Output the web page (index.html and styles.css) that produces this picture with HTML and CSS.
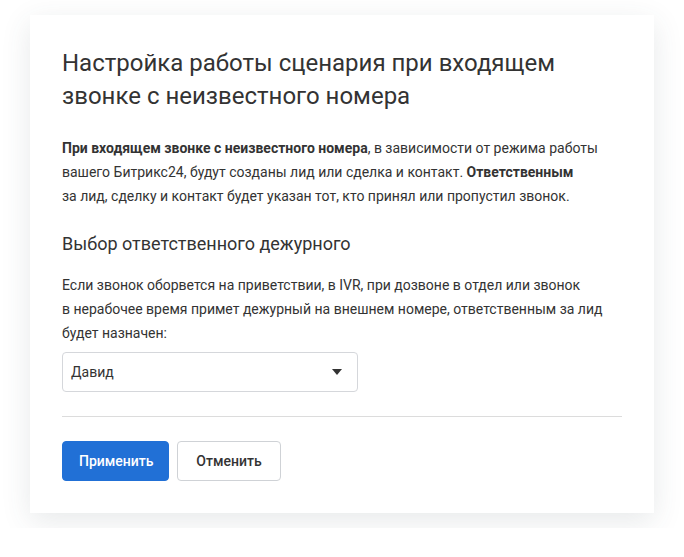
FILE: index.html
```html
<!DOCTYPE html>
<html lang="ru">
<head>
<meta charset="UTF-8">
<meta name="viewport" content="width=device-width, initial-scale=1.0">
<link rel="stylesheet" href="styles.css">
</head>
<body>
    <div class="card">
        <h1 class="title">Настройка работы сценария при входящем<br>звонке с неизвестного номера</h1>
        <p class="text">
            <b>При входящем звонке с неизвестного номера</b>, в зависимости от режима работы<br>
            вашего Битрикс24, будут созданы лид или сделка и контакт. <b>Ответственным</b><br>
            за лид, сделку и контакт будет указан тот, кто принял или пропустил звонок.
        </p>

        <h2 class="subtitle">Выбор ответственного дежурного</h2>
        <p class="text">
            Если звонок оборвется на приветствии, в IVR, при дозвоне в отдел или звонок<br>
            в нерабочее время примет дежурный на внешнем номере, ответственным за лид<br>
            будет назначен:
        </p>

        <div class="select">
            <span>Давид</span>
            <svg class="select-arrow" width="10" height="6" viewBox="0 0 10 6"><path d="M0 0h10L5 6z" fill="#333"/></svg>
        </div>

        <div class="divider"></div>

        <div class="buttons">
            <button class="btn btn-primary">Применить</button>
            <button class="btn btn-light">Отменить</button>
        </div>
    </div>
</body>
</html>
```

FILE: styles.css
```css
body {
    margin: 0;
    background-color: #fff;
    font-family: Roboto, "Noto Sans", sans-serif;
    color: #333;
}

.card {
    margin: 15px 30px;
    padding: 32px;
    background-color: #fff;
    box-shadow: 0 8px 28px rgba(60, 70, 80, 0.12);
}

.title {
    margin: 0 0 23px;
    font-size: 24px;
    font-weight: 400;
    line-height: 33px;
    color: #333;
}

.text {
    margin: 0;
    font-size: 14px;
    line-height: 24px;
}

.text b {
    font-weight: 700;
}

.subtitle {
    margin: 24px 0 17px;
    font-size: 18px;
    font-weight: 400;
    line-height: 24px;
}

.select {
    margin-top: 7px;
    width: 296px;
    height: 40px;
    box-sizing: border-box;
    border: 1px solid #d5d7db;
    border-radius: 4px;
    padding: 0 15px 0 8px;
    display: flex;
    align-items: center;
    justify-content: space-between;
    font-size: 14px;
}

.divider {
    margin: 24px 0;
    height: 1px;
    background-color: #dcdcdc;
}

.buttons {
    display: flex;
    gap: 8px;
}

.btn {
    height: 40px;
    box-sizing: border-box;
    border-radius: 4px;
    font-family: Roboto, sans-serif;
    font-size: 14px;
    font-weight: 500;
    padding: 0 16px;
    cursor: pointer;
}

.btn-primary {
    width: 107px;
    background-color: #2170d6;
    border: 1px solid #2170d6;
    color: #fff;
}

.btn-light {
    width: 104px;
    background-color: #fff;
    border: 1px solid #cfd2d6;
    color: #333;
}
```
